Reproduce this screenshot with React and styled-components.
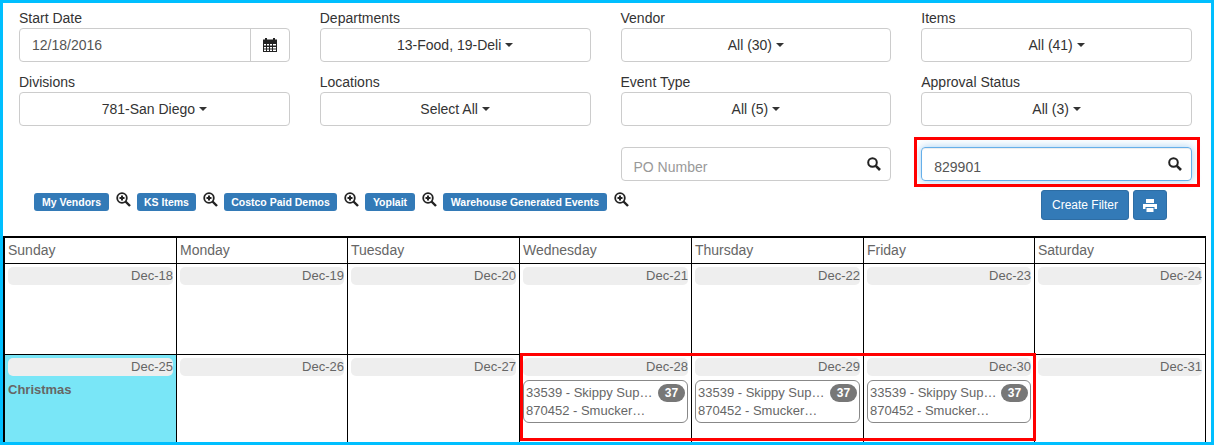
import React from 'react';
import styled, {createGlobalStyle} from 'styled-components';

const GlobalStyle = createGlobalStyle`
  html, body {
    margin: 0;
    padding: 0;
    background: #fff;
  }
  * {
    box-sizing: border-box;
  }
`;

const Page = styled.div`
  width: 1214px;
  height: 445px;
  overflow: hidden;
  border: 3px solid #00bfff;
  font-family: "Liberation Sans", Arial, sans-serif;
  font-size: 14px;
  line-height: 20px;
  color: #333;
  background: #fff;
`;

const Filters = styled.div`
  display: grid;
  grid-template-columns: repeat(4, 270.75px);
  column-gap: 30px;
  row-gap: 10px;
  padding: 5px 0 0 16px;
`;

const Field = styled.div`
  min-width: 0;
`;

const Label = styled.div`
  height: 20px;
`;

const InputGroup = styled.div`
  display: flex;
  height: 34px;
  border: 1px solid #ccc;
  border-radius: 4px;
  overflow: hidden;
`;

const DateText = styled.div`
  flex: 1;
  padding: 6px 12px;
  color: #555;
`;

const Addon = styled.div`
  width: 39px;
  border-left: 1px solid #ccc;
  display: flex;
  align-items: center;
  justify-content: center;
`;

const Select = styled.div`
  height: 34px;
  border: 1px solid #ccc;
  border-radius: 4px;
  display: flex;
  align-items: center;
  justify-content: center;
  gap: 4px;
`;

const Caret = styled.span`
  width: 0;
  height: 0;
  border-top: 4px solid #333;
  border-left: 4px solid transparent;
  border-right: 4px solid transparent;
`;

const SearchRow = styled.div`
  display: grid;
  grid-template-columns: repeat(4, 270.75px);
  column-gap: 30px;
  padding-left: 16px;
  margin-top: 11px;
  height: 50px;
`;

const SearchCell = styled.div`
  grid-column: ${p => p.$col};
  position: relative;
  padding-top: 10px;
`;

const RedFrame = styled.div`
  position: absolute;
  left: -7px;
  right: -8px;
  top: 0;
  bottom: 0;
  border: 3px solid #f00;
  pointer-events: none;
`;

const SearchBox = styled.div`
  height: 34px;
  border: 1px solid ${p => (p.$focus ? '#66afe9' : '#ccc')};
  border-radius: 4px;
  display: flex;
  align-items: center;
  justify-content: space-between;
  padding: 0 9px 0 12px;
  box-shadow: ${p => (p.$focus ? 'inset 0 1px 1px rgba(0,0,0,.075), 0 0 8px rgba(102,175,233,.6)' : 'none')};
  color: ${p => (p.$placeholder ? '#999' : '#555')};
`;

const SearchText = styled.span`
  margin-top: 6px;
`;

const ActionRow = styled.div`
  display: flex;
  justify-content: space-between;
  align-items: flex-start;
  height: 49px;
  padding: 3px 44px 0 31px;
`;

const Tags = styled.div`
  display: flex;
  align-items: center;
  padding-top: 3px;
`;

const Tag = styled.span`
  width: ${p => p.$w}px;
  height: 18px;
  margin-right: 7px;
  background: #337ab7;
  border-radius: 3px;
  color: #fff;
  font-size: 10.5px;
  font-weight: bold;
  line-height: 18px;
  text-align: center;
  white-space: nowrap;
`;

const ZoomIcon = styled.svg`
  width: 15px;
  height: 15px;
  margin: -5px 6px 0 0;
`;

const Actions = styled.div`
  display: flex;
  gap: 4px;
`;

const Button = styled.div`
  height: 30px;
  background: #337ab7;
  border: 1px solid #2e6da4;
  border-radius: 3px;
  color: #fff;
  font-size: 12px;
  display: flex;
  align-items: center;
  justify-content: center;
  width: ${p => p.$w}px;
`;

const Calendar = styled.div`
  position: relative;
  width: 1203px;
  border-top: 2px solid #000;
  border-left: 2px solid #000;
  border-right: 1px solid #000;
  display: grid;
  grid-template-columns: 172px 171px 172px 172px 172px 171px 1fr;
  grid-template-rows: 26px 91px 90px;
`;

const HeadCell = styled.div`
  border-right: 1px solid #000;
  border-bottom: 1px solid #000;
  padding: 2px 3px 0;
  color: #666;
  &:nth-child(7n) {
    border-right: 0;
  }
`;

const DayCell = styled.div`
  min-width: 0;
  border-right: 1px solid #000;
  border-bottom: 1px solid #000;
  padding: 3px;
  background: ${p => (p.$holiday ? '#79e6f7' : '#fff')};
  color: #666;
  font-size: 13px;
  &:nth-child(7n) {
    border-right: 0;
  }
`;

const DatePill = styled.div`
  height: 18px;
  line-height: 18px;
  background: #eee;
  border-radius: 5px;
  text-align: right;
`;

const Holiday = styled.div`
  font-weight: bold;
  margin-top: 4px;
`;

const EventCard = styled.div`
  margin-top: 4px;
  height: 43px;
  border: 1px solid #888;
  border-radius: 6px;
  padding: 3px 2px 0;
  line-height: 18px;
`;

const EventLine = styled.div`
  display: flex;
  justify-content: space-between;
  height: 18px;
  white-space: nowrap;
`;

const Badge = styled.span`
  flex: none;
  width: 27px;
  height: 18px;
  background: #777;
  border-radius: 9px;
  color: #fff;
  font-size: 12px;
  font-weight: bold;
  line-height: 18px;
  text-align: center;
`;

const EventHighlight = styled.div`
  position: absolute;
  left: 515px;
  width: 516px;
  top: 115px;
  height: 88px;
  border: 3px solid #f00;
  pointer-events: none;
`;

const CalendarIcon = () => (
    <svg width="14" height="14" viewBox="0 0 14 14">
        <path fill="#222" d="M0 1.500h2V0h2v1.500h6V0h2v1.500h2V14H0z"/>
        <path fill="#fff" d="M1 6h2v1.500H1zM4 6h2v1.500H4zM7 6h2v1.500H7zM10 6h3v1.500h-3zM1 9h2v1.500H1zM4 9h2v1.500H4zM7 9h2v1.500H7zM10 9h3v1.500h-3zM1 11.500h2V13H1zM4 11.500h2V13H4zM7 11.500h2V13H7zM10 11.500h3V13h-3z"/>
    </svg>
);

const SearchIcon = () => (
    <svg width="14" height="14" viewBox="0 0 14 14" fill="none" stroke="#222">
        <circle cx="5.500" cy="5.500" r="4.300" strokeWidth="2"/>
        <path d="M8.800 8.800L13 13" strokeWidth="2.600"/>
    </svg>
);

const ZoomIn = () => (
    <ZoomIcon viewBox="0 0 15 15" fill="none" stroke="#222">
        <circle cx="6" cy="6" r="4.800" strokeWidth="1.800"/>
        <path d="M9.500 9.500L14 14" strokeWidth="2.400"/>
        <path d="M6 3.500v5M3.500 6h5" strokeWidth="2"/>
    </ZoomIcon>
);

const PrintIcon = () => (
    <svg width="14" height="13" viewBox="0 0 14 13">
        <path fill="#fff" d="M3 0h8v4H3zM0 5h14v5h-2.500V8h-9v2H0zM3.500 9h7v4h-7z"/>
    </svg>
);

const days = ['Sunday', 'Monday', 'Tuesday', 'Wednesday', 'Thursday', 'Friday', 'Saturday'];
const week1 = ['Dec-18', 'Dec-19', 'Dec-20', 'Dec-21', 'Dec-22', 'Dec-23', 'Dec-24'];
const week2 = ['Dec-25', 'Dec-26', 'Dec-27', 'Dec-28', 'Dec-29', 'Dec-30', 'Dec-31'];
const eventDays = ['Dec-28', 'Dec-29', 'Dec-30'];
const tags = [
    {label: 'My Vendors', w: 75},
    {label: 'KS Items', w: 59},
    {label: 'Costco Paid Demos', w: 113},
    {label: 'Yoplait', w: 50},
    {label: 'Warehouse Generated Events', w: 164},
];

const selects = [
    ['Departments', '13-Food, 19-Deli'],
    ['Vendor', 'All (30)'],
    ['Items', 'All (41)'],
    ['Divisions', '781-San Diego'],
    ['Locations', 'Select All'],
    ['Event Type', 'All (5)'],
    ['Approval Status', 'All (3)'],
];

const App = () => {
    return (
        <Page>
            <GlobalStyle/>
            <Filters>
                <Field>
                    <Label>Start Date</Label>
                    <InputGroup>
                        <DateText>12/18/2016</DateText>
                        <Addon><CalendarIcon/></Addon>
                    </InputGroup>
                </Field>
                {selects.map(([label, value]) => (
                    <Field key={label}>
                        <Label>{label}</Label>
                        <Select>{value}<Caret/></Select>
                    </Field>
                ))}
            </Filters>
            <SearchRow>
                <SearchCell $col={3}>
                    <SearchBox $placeholder><SearchText>PO Number</SearchText><SearchIcon/></SearchBox>
                </SearchCell>
                <SearchCell $col={4}>
                    <SearchBox $focus><SearchText>829901</SearchText><SearchIcon/></SearchBox>
                    <RedFrame/>
                </SearchCell>
            </SearchRow>
            <ActionRow>
                <Tags>
                    {tags.map(tag => (
                        <React.Fragment key={tag.label}>
                            <Tag $w={tag.w}>{tag.label}</Tag>
                            <ZoomIn/>
                        </React.Fragment>
                    ))}
                </Tags>
                <Actions>
                    <Button $w={88}>Create Filter</Button>
                    <Button $w={34}><PrintIcon/></Button>
                </Actions>
            </ActionRow>
            <Calendar>
                {days.map(day => <HeadCell key={day}>{day}</HeadCell>)}
                {week1.map(date => (
                    <DayCell key={date}><DatePill>{date}</DatePill></DayCell>
                ))}
                {week2.map(date => (
                    <DayCell key={date} $holiday={date === 'Dec-25'}>
                        <DatePill>{date}</DatePill>
                        {date === 'Dec-25' && <Holiday>Christmas</Holiday>}
                        {eventDays.includes(date) && (
                            <EventCard>
                                <EventLine>33539 - Skippy Sup…<Badge>37</Badge></EventLine>
                                <EventLine>870452 - Smucker…</EventLine>
                            </EventCard>
                        )}
                    </DayCell>
                ))}
                <EventHighlight/>
            </Calendar>
        </Page>
    );
}

export default App;
